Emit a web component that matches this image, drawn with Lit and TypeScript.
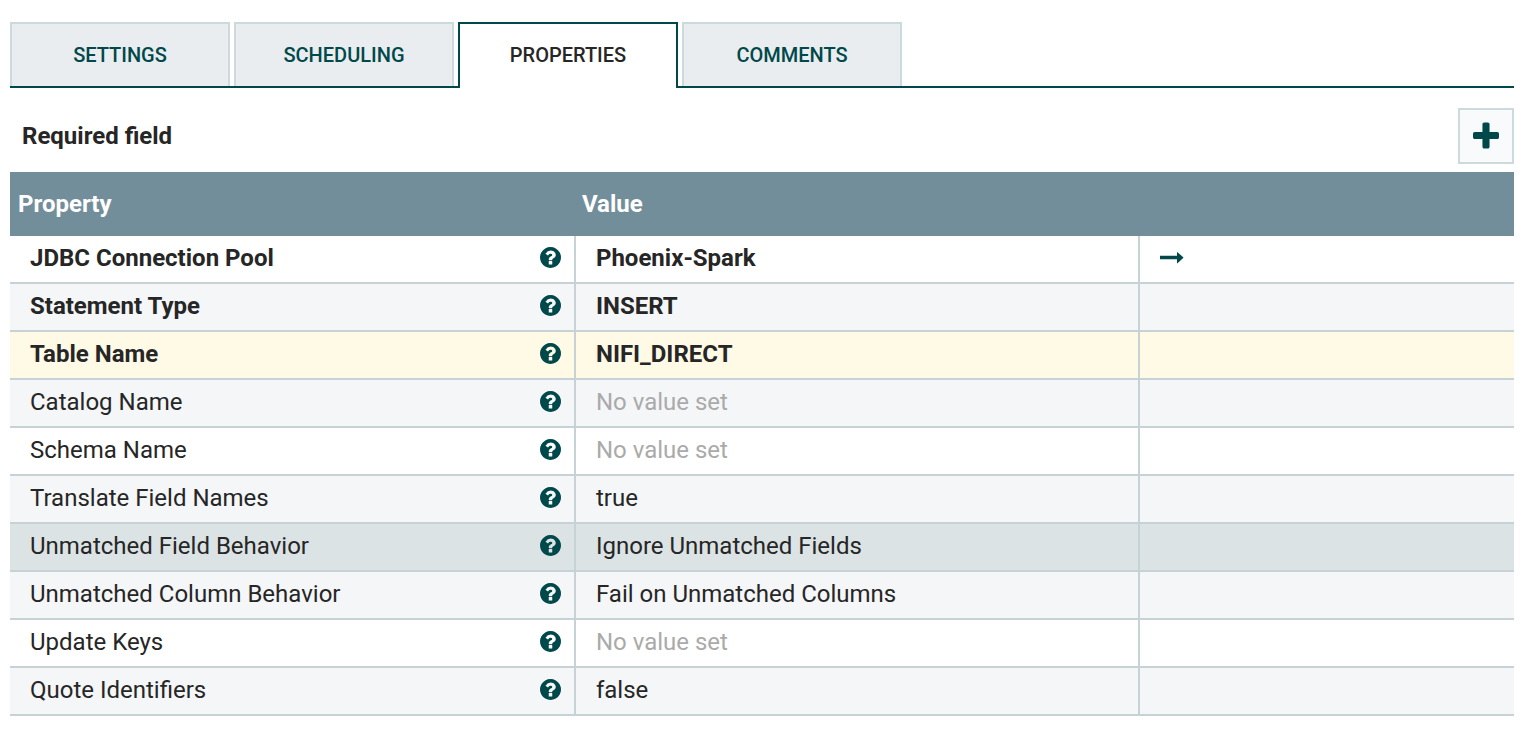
import { LitElement, html, css, nothing } from "lit";
import { customElement, property, state } from "lit/decorators.js";
import { classMap } from "lit/directives/class-map.js";

interface PropertyRow {
  name: string;
  value?: string;
  required?: boolean;
  link?: boolean;
  tone?: "edited" | "hovered";
}

const TABS = ["Settings", "Scheduling", "Properties", "Comments"];

const ROWS: PropertyRow[] = [
  { name: "JDBC Connection Pool", value: "Phoenix-Spark", required: true, link: true },
  { name: "Statement Type", value: "INSERT", required: true },
  { name: "Table Name", value: "NIFI_DIRECT", required: true, tone: "edited" },
  { name: "Catalog Name" },
  { name: "Schema Name" },
  { name: "Translate Field Names", value: "true" },
  { name: "Unmatched Field Behavior", value: "Ignore Unmatched Fields", tone: "hovered" },
  { name: "Unmatched Column Behavior", value: "Fail on Unmatched Columns" },
  { name: "Update Keys" },
  { name: "Quote Identifiers", value: "false" },
];

const helpIcon = html`<svg width="21" height="21" viewBox="128 128 1536 1536" aria-hidden="true">
  <path fill="currentColor" d="M1024 1376v-192q0-14-9-23t-23-9h-192q-14 0-23 9t-9 23v192q0 14 9 23t23 9h192q14 0 23-9t9-23zm256-672q0-88-55.5-163t-138.5-116-170-41q-243 0-371 213-15 24 8 42l132 100q7 6 19 6 16 0 25-12 53-68 86-92 34-24 86-24 48 0 85.500 26t37.500 59q0 38-20 61t-68 45q-63 28-115.500 86.500t-52.500 125.500v36q0 14 9 23t23 9h192q14 0 23-9t9-23q0-19 21.500-49.500t54.500-49.500q32-18 49-28.500t46-35 44.500-48 28-60.500 12.500-81zm384 192q0 209-103 385.500t-279.500 279.500-385.500 103-385.500-103-279.500-279.500-103-385.500 103-385.500 279.500-279.500 385.500-103 385.500 103 279.500 279.500 103 385.500z"/>
</svg>`;

const plusIcon = html`<svg width="26" height="26" viewBox="192 152 1408 1408" aria-hidden="true">
  <path fill="currentColor" d="M1600 736v192q0 40-28 68t-68 28h-416v416q0 40-28 68t-68 28h-192q-40 0-68-28t-28-68v-416h-416q-40 0-68-28t-28-68v-192q0-40 28-68t68-28h416v-416q0-40 28-68t68-28h192q40 0 68 28t28 68v416h416q40 0 68 28t28 68z"/>
</svg>`;

const arrowIcon = html`<svg width="24" height="12" viewBox="0 0 24 12" aria-hidden="true">
  <path fill="currentColor" d="M.3 3.700H17V.500q0-.500.500-.300l5.700 5q.400.400 0 .800l-5.700 5.200q-.500.200-.500-.300V7.300H.3Q0 7.300 0 7V4q0-.300.3-.300z"/>
</svg>`;

@customElement("property-table")
export class PropertyTable extends LitElement {
  @property({ attribute: false }) rows: PropertyRow[] = [];

  static styles = css`
    :host {
      display: block;
    }
    .table {
      width: 100%;
      table-layout: fixed;
      border-collapse: separate;
      border-spacing: 0;
      font-size: 24px;
      line-height: 28px;
      color: #262626;
    }
    .col-name {
      width: 37.63%;
    }
    .col-value {
      width: 37.5%;
    }
    .head {
      height: 64px;
      padding: 0 8px;
      background: #728e9b;
      color: #fff;
      font-weight: 700;
      text-align: left;
    }
    .head + .head {
      padding-left: 6px;
    }
    .row {
      background: #fff;
    }
    .row:nth-child(even) {
      background: #f4f6f8;
    }
    .row.edited {
      background: #fffae6;
    }
    .row.hovered {
      background: #dbe3e5;
    }
    .cell {
      height: 48px;
      box-sizing: border-box;
      padding: 0 20px 2px;
      border-bottom: 2px solid #c7d2d7;
      border-right: 2px solid #c7d2d7;
      font-weight: 400;
      text-align: left;
    }
    .cell:first-child {
      padding-right: 13px;
    }
    .cell:last-child {
      border-right: 0;
    }
    .required {
      font-weight: 700;
    }
    .name {
      display: flex;
      align-items: center;
      justify-content: space-between;
    }
    .unset {
      color: #aaa;
    }
    .help,
    .goto {
      display: flex;
      padding: 0;
      border: 0;
      background: none;
      color: #004849;
      cursor: pointer;
    }
    .help {
      padding-bottom: 1px;
    }
    .goto {
      width: 24px;
    }
  `;

  render() {
    return html`<table class="table">
      <colgroup>
        <col class="col-name" />
        <col class="col-value" />
        <col />
      </colgroup>
      <thead>
        <tr>
          <th class="head" scope="col">Property</th>
          <th class="head" scope="col">Value</th>
          <td class="head"></td>
        </tr>
      </thead>
      <tbody>
        ${this.rows.map((row) => {
          const cell = classMap({ cell: true, required: !!row.required });
          return html`<tr class=${classMap({ row: true, edited: row.tone === "edited", hovered: row.tone === "hovered" })}>
            <th class=${cell} scope="row">
              <div class="name">
                <span>${row.name}</span>
                <button class="help" type="button" aria-label="Help">${helpIcon}</button>
              </div>
            </th>
            <td class=${cell}>
              ${row.value ? row.value : html`<span class="unset">No value set</span>`}
            </td>
            <td class="cell">
              ${row.link ? html`<a class="goto" href="#service" aria-label="Go to">${arrowIcon}</a>` : nothing}
            </td>
          </tr>`;
        })}
      </tbody>
    </table>`;
  }
}

@customElement("app-root")
export class AppRoot extends LitElement {
  @state() private active = "Properties";

  static styles = css`
    :host {
      display: block;
      padding: 22px 22px 18px 10px;
      background: #fff;
      color: #262626;
      font-family: Roboto, "Liberation Sans", sans-serif;
    }
    .tabs {
      display: flex;
      gap: 4px;
      border-bottom: 2px solid #004849;
    }
    .tab {
      flex: 0 1 220px;
      height: 64px;
      padding: 0;
      border: 2px solid #ccdadb;
      border-bottom: 0;
      background: #e9edf0;
      color: #004849;
      font: 500 20px/24px Roboto, "Liberation Sans", sans-serif;
      text-transform: uppercase;
      cursor: pointer;
    }
    .tab.active {
      height: 66px;
      margin-bottom: -2px;
      padding-bottom: 2px;
      border-color: #004849;
      background: #fff;
      color: #262626;
    }
    .toolbar {
      display: flex;
      align-items: center;
      justify-content: space-between;
      padding: 20px 0 8px 12px;
    }
    .legend {
      font-size: 24px;
      line-height: 28px;
      font-weight: 700;
    }
    .add {
      display: flex;
      align-items: center;
      justify-content: center;
      width: 56px;
      height: 56px;
      padding: 0;
      border: 2px solid #ccdadb;
      background: #f9fafc;
      color: #004849;
      cursor: pointer;
    }
    .add svg {
      overflow: visible;
    }
  `;

  render() {
    return html`
      <div class="tabs" role="tablist">
        ${TABS.map(
          (tab) => html`<button
            type="button"
            role="tab"
            class=${classMap({ tab: true, active: tab === this.active })}
            aria-selected=${tab === this.active ? "true" : "false"}
            @click=${() => (this.active = tab)}
          >${tab}</button>`
        )}
      </div>
      <div class="toolbar">
        <span class="legend">Required field</span>
        <button class="add" type="button" aria-label="Add property">${plusIcon}</button>
      </div>
      <property-table .rows=${ROWS}></property-table>
    `;
  }
}
